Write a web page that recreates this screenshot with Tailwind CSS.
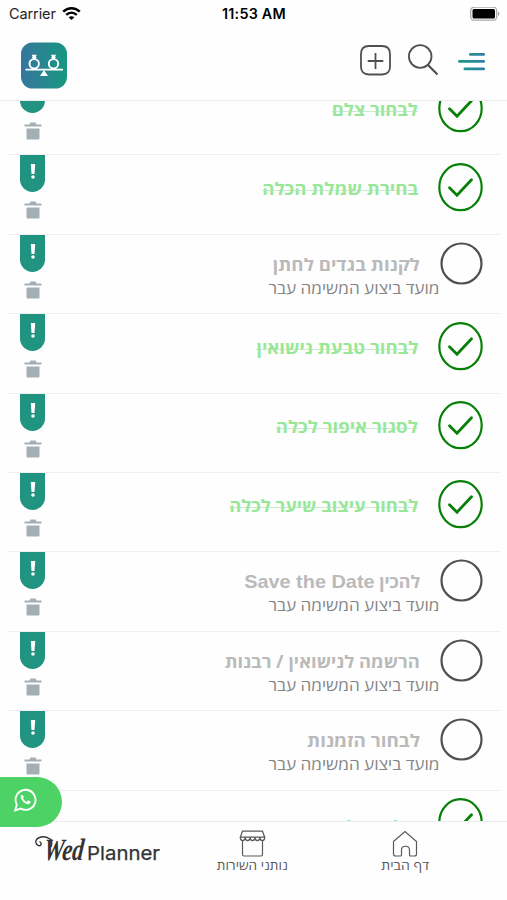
<!DOCTYPE html>
<html lang="he">
<head>
<meta charset="utf-8">
<title>WedPlanner</title>
<script src="https://cdn.jsdelivr.net/npm/@tailwindcss/browser@4"></script>
</head>
<body class="bg-white">
<div class="relative flex h-[900px] w-[507px] flex-col overflow-hidden bg-[#fefefe] font-['Open_Sans','Liberation_Sans',sans-serif]">
  <header class="flex h-[101px] shrink-0 flex-col border-b border-[#ececec]">
    <div class="grid h-[28px] grid-cols-3 items-center pl-[9px] pr-[7px] font-['Inter',sans-serif] text-black">
      <div class="flex items-center gap-[6px] text-[14.5px] text-[#222]"><span class="tracking-[-0.1px]">Carrier</span>
        <svg width="19" height="14" viewBox="0 0 19 14" fill="none" stroke="#000" stroke-width="2.5"><path d="M1.2 4.7C6 .1 13 .1 17.8 4.7"/><path d="M4.2 7.9c3.2-2.9 7.4-2.9 10.6 0"/><path d="M6.6 10.2c1.8-1.4 4-1.4 5.800 0L9.500 13z" fill="#000" stroke="none"/></svg>
      </div>
      <div class="-ml-px whitespace-nowrap text-center text-[14.3px] font-semibold tracking-[0.25px]">11:53 AM</div>
      <svg class="justify-self-end" width="30" height="15" viewBox="0 0 30 15"><rect x=".7" y=".2" width="26" height="13" rx="3.500" fill="none" stroke="#aaa" stroke-width="1.3"/><rect x="2.500" y="2" width="22.500" height="9.500" rx="1.500"/><path d="M28 4.500q3 2.200 0 4.500z" fill="#aaa"/></svg>
    </div>
    <div class="flex items-start justify-between pl-[21px] pr-[21px] pt-[14px]">
      <svg width="46" height="47" viewBox="0 0 46 47"><defs><linearGradient id="g" x1="0" y1="0" x2="1" y2="0"><stop stop-color="#36769e"/><stop offset="1" stop-color="#17977f"/></linearGradient></defs><rect y=".5" width="46" height="46" rx="11.500" fill="url(#g)"/><g fill="none" stroke="#fff"><circle cx="13.200" cy="21.800" r="4.700" stroke-width="1.900"/><circle cx="32.500" cy="21.800" r="4.700" stroke-width="1.900"/><path d="M4.500 27.600h37.500" stroke-width="1.900"/></g><path d="M10.700 12.800h5l-1 2.200h1l-1.500 2.600h-2L10.700 15h1zM30 12.800h5l-1 2.200h1l-1.500 2.600h-2L30 15h1zM23 28l4 6h-8z" fill="#fff"/></svg>
      <div class="flex items-start gap-[17px] pt-[2px]">
        <svg width="31" height="32" viewBox="0 0 31 32" fill="none" stroke="#505050" stroke-width="1.800"><path d="M9 30.500Q1 30 1 23V10Q1 2 9 2h13q8 0 8 8v13q0 7-8 7.500z"/><path d="M15.500 9v16M7.700 17h15.600"/></svg>
        <svg width="31" height="32" viewBox="0 0 31 32" fill="none" stroke="#505050" stroke-width="1.800"><circle cx="12.200" cy="12.500" r="11.300"/><path d="M20 21L29.500 30.500" stroke-width="2.200"/></svg>
        <svg class="ml-px" width="29" height="32" viewBox="0 0 29 32"><defs><linearGradient id="m" gradientUnits="userSpaceOnUse" x1="2" y1="0" x2="28" y2="0"><stop stop-color="#1b9a87"/><stop offset="1" stop-color="#347da5"/></linearGradient></defs><g fill="url(#m)"><rect x="12" y="9" width="16" height="2.700" rx="1.300"/><rect x="1" y="16" width="27" height="2.700" rx="1.300"/><rect x="6.500" y="23.500" width="21.500" height="2.700" rx="1.300"/></g></svg>
      </div>
    </div>
  </header>

  <main class="min-h-0 flex-1 overflow-hidden"><div id="list" class="-mt-[25px] ml-[8px] w-[492px]"></div></main>

  <nav class="grid h-[79px] shrink-0 grid-cols-[177px_150px_180px] border-t border-[#ececec] bg-[#fefefe] text-[#5a5a5a]">
    <div class="flex items-start pl-[35px] pt-[13px] text-[#333]">
      <svg class="overflow-visible" width="128" height="34" viewBox="0 0 128 34" fill="#333">
        <g font-family="Inter, sans-serif"><text x="52" y="25.300" font-size="19" textLength="73" lengthAdjust="spacingAndGlyphs" stroke="#333" stroke-width=".25">Planner</text><text transform="translate(8 25) skewX(-6)" font-size="31" font-family="Liberation Serif, serif" font-style="italic" font-weight="bold" textLength="40" lengthAdjust="spacingAndGlyphs">Wed</text></g>
        <path d="M15 4C7-1-2 4 1.500 9c3 4 7 0 3-2.500M15 4q3 1 1 8" fill="none" stroke="#333" stroke-width="1.400"/>
      </svg>
    </div>
    <div class="flex flex-col items-center pt-[8px]">
      <svg width="27" height="27" viewBox="0 0 27 27" fill="none" stroke="#5a5a5a" stroke-width="1.200"><path d="M3.500 11v13.500q0 1.500 1.500 1.500h17q1.500 0 1.500-1.500V11M3.500 1.200h20l2.200 6H1.300zM1.300 7.200c0 4.500 4.800 4.500 4.900 0 0 4.500 4.800 4.500 4.900 0 0 4.500 4.800 4.500 4.900 0 0 4.500 4.800 4.500 4.900 0 0 4.500 4.800 4.500 4.900 0"/></svg>
      <div class="-mt-[2px] flex w-[71px] whitespace-nowrap text-[13px] leading-[20px]" data-w="71" dir="rtl"><span class="inline-block shrink-0">נותני השירות</span></div>
    </div>
    <div class="flex flex-col items-center pt-[8px] pr-[24px]">
      <svg width="26" height="27" viewBox="0 0 26 27" fill="none" stroke="#5a5a5a" stroke-width="1.200"><path d="M1.500 11.500L13 1.500l11.500 10V24q0 2-2 2h-4q-1 0-1-1v-5c0-5-8-5-8 0v5q0 1-1 1h-5q-2 0-2-2z"/></svg>
      <div class="-mt-[2px] flex w-[48px] whitespace-nowrap text-[13px] leading-[20px]" data-w="48" dir="rtl"><span class="inline-block shrink-0">דף הבית</span></div>
    </div>
  </nav>

  <a class="absolute left-0 top-[777px] flex h-[50px] w-[62px] items-start rounded-r-full bg-[#4cd265] pl-[14px] pt-[11px]">
    <svg width="23" height="24" viewBox="0 0 23 24" fill="none" stroke="#fff" stroke-width="1.900"><path d="M1.200 22.300l1.600-5.700a10 10 0 1 1 4 4z"/><path d="M8 6.500q-2 1-1.200 3.500c1.500 3.500 3.500 5.300 6.500 6.200q3 .4 3.500-2.400l-2.700-1.500-1.500 1.600q-2.500-1-3.600-3.600l1-1.300z" fill="#fff" stroke="none"/></svg>
  </a>
</div>
<script>
const tasks = [
  ['לבחור צלם', 86, true],
  ['בחירת שמלת הכלה', 156, true],
  ['לקנות בגדים לחתן', 147, false],
  ['לבחור טבעת נישואין', 162, true],
  ['לסגור איפור לכלה', 142, true],
  ['לבחור עיצוב שיער לכלה', 189, true],
  ['להכין <span class="[font-family:Liberation_Sans] font-bold text-[19px]">Save the Date</span>', 176, false],
  ['הרשמה לנישואין / רבנות', 195, false],
  ['לבחור הזמנות', 113, false],
  ['שליחת לינק אישורי הגעה', 207, true, 'mt-[15.500px]']
];
const check = '<svg class="shrink-0" width="45" height="49" viewBox="0 0 45 49" fill="none" stroke="#078007" stroke-width="2.200"><ellipse cx="22.500" cy="24.200" rx="21.200" ry="23"/><path d="M11.500 24.700l7.500 7.500L33.500 16.700" stroke-width="2.800" stroke-linecap="round"/></svg>';
const ring = '<svg class="shrink-0" width="45" height="45" viewBox="0 0 45 45" fill="none" stroke="#505050" stroke-width="2.200"><circle cx="23.500" cy="21.500" r="20"/></svg>';
const side = '<div class="flex w-[25px] flex-col items-center"><div class="flex h-[37px] w-[25px] justify-center rounded-b-full bg-[#209480] pt-[9px]"><svg width="6" height="15" viewBox="0 0 6 15" fill="#fff"><path d="M.8 0h4.400l-.7 10h-3z"/><circle cx="3" cy="13" r="1.800"/></svg></div><svg class="mt-[9px]" width="18" height="18" viewBox="0 0 18 18" fill="#a3afb5"><path d="M.5 2.500h5l1-2h5l1 2h5v2H.5zM2.500 6.500h13v10q0 1-1 1h-11q-1 0-1-1z"/></svg></div>';
document.getElementById('list').innerHTML = tasks.map(([t, w, done, mt]) =>
  '<div class="flex h-[79.400px] justify-between border-b-[1.500px] border-[#eeeeee] pl-[12px] pr-[17px]">' + side +
  '<div class="flex ' + (done ? 'pt-[7.500px]' : 'pt-[7px]') + '"><div class="relative flex flex-col items-end whitespace-nowrap" dir="ltr">' +
  (done
    ? '<div class="mr-[20px] ' + (mt || 'mt-[13px]') + ' text-[17px] leading-[26px] font-bold text-[#96e896] relative" data-w="' + w + '" dir="rtl"><span class="inline-block">' + t + '</span><i class="absolute inset-x-0 top-[14px] h-px bg-[#b5dfb5]/70"></i></div>'
    : '<div class="mr-[18px] mt-[10px] h-[26px] text-[17px] leading-[26px] font-bold text-[#bababa]" data-w="' + w + '" dir="rtl"><span class="inline-block">' + t + '</span></div><div class="-mt-[2px] -mr-px text-[16px] leading-[24px] text-[#858585]" data-w="171" dir="rtl"><span class="inline-block">מועד ביצוע המשימה עבר</span></div>') +
  '</div>' + (done ? check : ring) + '</div></div>').join('');
function fit() {
  document.querySelectorAll('[data-w]').forEach(el => {
    const s = el.firstElementChild, w = +el.dataset.w;
    s.style.transform = 'none';
    const k = w / s.getBoundingClientRect().width;
    el.style.width = w + 'px';
    s.style.transformOrigin = 'right';
    s.style.transform = 'scaleX(' + k + ')';
  });
}
fit();
window.addEventListener('load', fit);
document.fonts.ready.then(fit);
new ResizeObserver(fit).observe(document.getElementById('list'));
</script>
</body>
</html>
